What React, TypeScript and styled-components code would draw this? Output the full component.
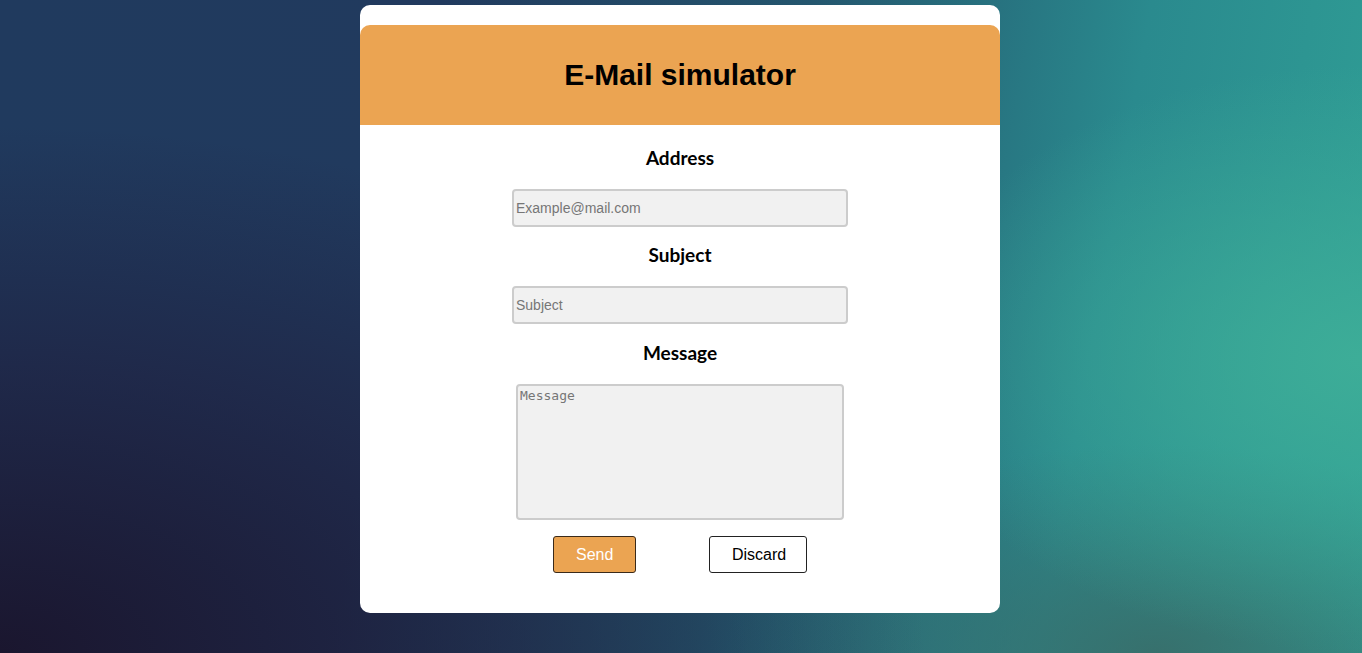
import React from "react";
import styled, { createGlobalStyle } from "styled-components";

const GlobalStyle = createGlobalStyle`
  html, body {
    margin: 0;
    padding: 0;
    height: 100%;
  }
  body {
    font-family: "Liberation Sans", Arial, sans-serif;
    background:
      radial-gradient(ellipse 80% 95% at 0% 100%, rgba(26, 20, 44, 0.95), rgba(30, 26, 56, 0.55) 45%, rgba(30, 26, 56, 0) 85%),
      radial-gradient(ellipse 45% 60% at 100% 55%, rgba(62, 174, 152, 0.95), rgba(62, 174, 152, 0) 75%),
      radial-gradient(ellipse 40% 40% at 85% 100%, rgba(58, 104, 100, 0.8), rgba(58, 104, 100, 0) 80%),
      linear-gradient(100deg, #203a5e 0%, #213a5e 30%, #24566e 55%, #2a8a8e 78%, #30a096 100%);
    min-height: 653px;
  }
  #root {
    padding-top: 5px;
    padding-right: 2px;
  }
`;

const Card = styled.form`
  width: 640px;
  margin: 0 auto;
  background: #ffffff;
  border-radius: 10px;
  padding: 20px 0 40px;
  box-sizing: border-box;
  display: flex;
  flex-direction: column;
  align-items: center;
`;

const Header = styled.header`
  align-self: stretch;
  height: 100px;
  background: #eba452;
  border-radius: 10px 10px 0 0;
  display: flex;
  align-items: center;
  justify-content: center;
  margin-bottom: 22px;
`;

const Title = styled.h1`
  margin: 0;
  font-family: "Liberation Sans", Arial, sans-serif;
  font-weight: 700;
  font-size: 30px;
  color: #000;
`;

const Label = styled.label<{ $gap?: number }>`
  display: block;
  font-family: Lato, "Open Sans", sans-serif;
  font-weight: 700;
  font-size: 19px;
  line-height: 22px;
  color: #000;
  margin-top: ${(p) => p.$gap ?? 0}px;
  margin-bottom: 20px;
`;

const Field = styled.input`
  width: 336px;
  height: 38px;
  box-sizing: border-box;
  border: 2px solid #cccccc;
  border-radius: 4px;
  background: #f1f1f1;
  padding: 0 2px;
  font-family: "Liberation Sans", Arial, sans-serif;
  font-size: 14px;
  color: #222;
  outline: none;
  &::placeholder {
    color: #767676;
  }
`;

const Area = styled.textarea`
  width: 328px;
  height: 136px;
  box-sizing: border-box;
  border: 2px solid #cccccc;
  border-radius: 4px;
  background: #f1f1f1;
  padding: 2px;
  font-family: "DejaVu Sans Mono", monospace;
  font-size: 13px;
  resize: none;
  outline: none;
  &::placeholder {
    color: #767676;
  }
`;

const Actions = styled.div`
  display: flex;
  justify-content: center;
  gap: 73px;
  margin-top: 16px;
`;

const Button = styled.button<{ $primary?: boolean }>`
  height: 37px;
  padding: 0 22px;
  box-sizing: border-box;
  border: 1px solid ${(p) => (p.$primary ? "#3a2a1a" : "#222")};
  border-radius: 3px;
  background: ${(p) => (p.$primary ? "#eba452" : "#ffffff")};
  color: ${(p) => (p.$primary ? "#ffffff" : "#000000")};
  font-family: "Liberation Sans", Arial, sans-serif;
  font-size: 16px;
  cursor: pointer;
`;

export default function App() {
  return (
    <>
      <GlobalStyle />
      <Card onSubmit={(e) => e.preventDefault()}>
        <Header>
          <Title>E-Mail simulator</Title>
        </Header>
        <Label htmlFor="address">Address</Label>
        <Field id="address" type="text" placeholder="Example@mail.com" />
        <Label htmlFor="subject" $gap={17}>Subject</Label>
        <Field id="subject" type="text" placeholder="Subject" />
        <Label htmlFor="message" $gap={18}>Message</Label>
        <Area id="message" placeholder="Message" />
        <Actions>
          <Button type="submit" $primary style={{ width: 83 }}>Send</Button>
          <Button type="button" style={{ width: 98 }}>Discard</Button>
        </Actions>
      </Card>
    </>
  );
}
